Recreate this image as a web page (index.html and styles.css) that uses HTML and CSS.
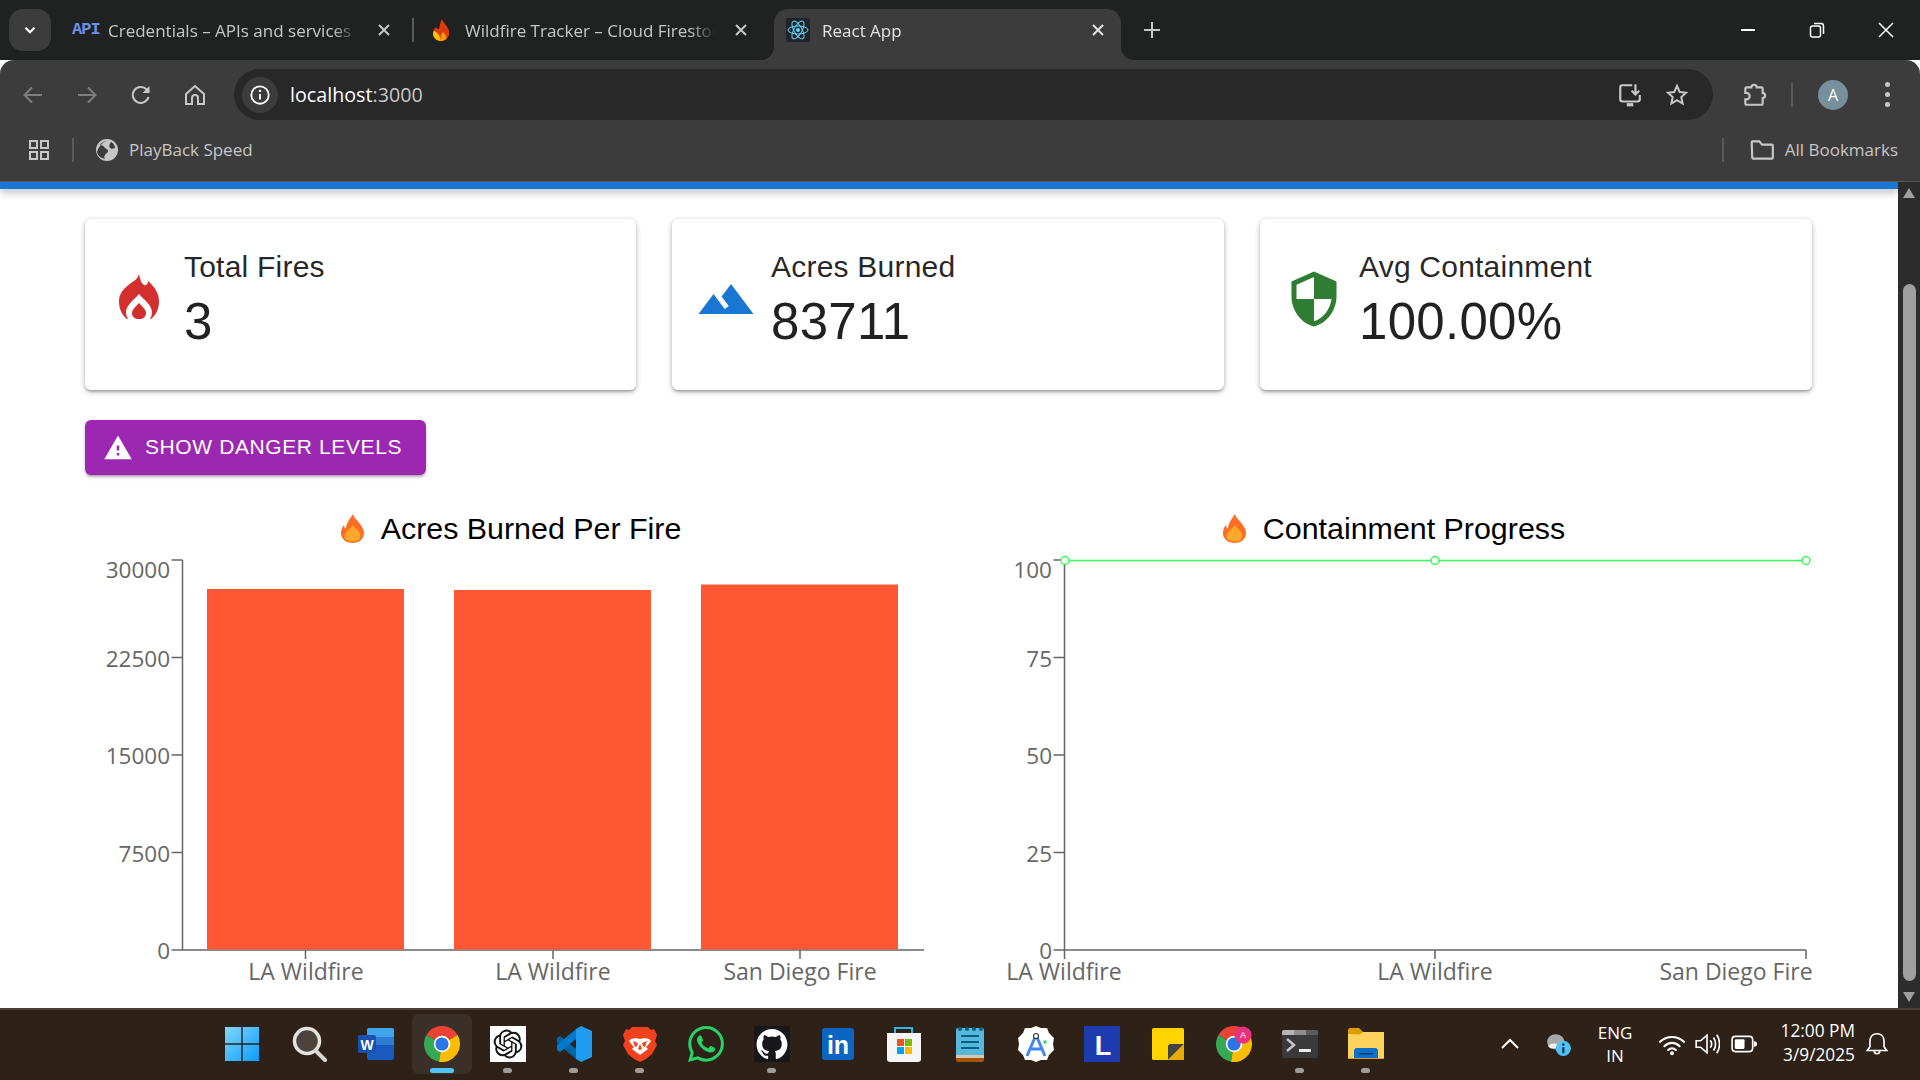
FILE: index.html
```html
<!DOCTYPE html>
<html lang="en">
<head>
<meta charset="utf-8">
<title>React App</title>
<link rel="stylesheet" href="styles.css">
</head>
<body>
<div class="screen">

  <header class="tabstrip">
    <button class="tabsearch"><svg viewBox="0 0 24 24" class="i18"><path d="M6 9l6 6 6-6" class="st-white3"/></svg></button>
    <div class="tab">
      <span class="fav fav-api">API</span>
      <span class="tab-title">Credentials – APIs and services -</span>
      <svg viewBox="0 0 16 16" class="tab-x"><path d="M3 3l10 10M13 3L3 13" class="st-light2"/></svg>
    </div>
    <div class="tab tab-sep">
      <svg viewBox="0 0 24 24" class="fav"><path d="M13 1c1 4 6 7 7 12 1 6-3 10-8 10S4 19 4 15c0-3 2-5 3-6 1 2 2 2 3 2 1-3 1-7 3-10z" fill="#dd3b0f"/><path d="M5 13c3 1 6 4 7 10-4 0-8-3-8-7 0-1 0-2 1-3z" fill="#ffc107"/><path d="M12 23c-1-4 0-7 2-9 2 2 4 4 3 7-1 1-3 2-5 2z" fill="#ff9800"/></svg>
      <span class="tab-title">Wildfire Tracker – Cloud Firestor</span>
      <svg viewBox="0 0 16 16" class="tab-x"><path d="M3 3l10 10M13 3L3 13" class="st-light2"/></svg>
    </div>
    <div class="tab tab-active">
      <svg viewBox="0 0 24 24" class="fav"><rect width="24" height="24" rx="2" fill="#20232a"/><circle cx="12" cy="12" r="2" fill="#61dafb"/><g class="st-react"><ellipse cx="12" cy="12" rx="10" ry="4"/><ellipse cx="12" cy="12" rx="10" ry="4" transform="rotate(60 12 12)"/><ellipse cx="12" cy="12" rx="10" ry="4" transform="rotate(120 12 12)"/></g></svg>
      <span class="tab-title tab-title-on">React App</span>
      <svg viewBox="0 0 16 16" class="tab-x"><path d="M3 3l10 10M13 3L3 13" class="st-light2"/></svg>
    </div>
    <button class="newtab"><svg viewBox="0 0 20 20" class="i20"><path d="M10 2v16M2 10h16" class="st-light2"/></svg></button>
    <div class="winctl">
      <span class="winbtn"><svg viewBox="0 0 18 18" class="i18"><path d="M2 9h14" class="st-white2"/></svg></span>
      <span class="winbtn"><svg viewBox="0 0 18 18" class="i18"><rect x="2.500" y="5" width="10" height="11" rx="2" class="st-white15"/><path d="M6 2.500h7a2.500 2.500 0 0 1 2.500 2.500v8" class="st-white15"/></svg></span>
      <span class="winbtn"><svg viewBox="0 0 18 18" class="i18"><path d="M2 2l14 14M16 2L2 16" class="st-white15"/></svg></span>
    </div>
  </header>

  <section class="chrome">
    <div class="navrow">
      <span class="navbtn"><svg viewBox="0 0 24 24" class="i24"><path d="M21 12H4M11 4.500L3.500 12l7.500 7.500" class="st-dim2"/></svg></span>
      <span class="navbtn"><svg viewBox="0 0 24 24" class="i24"><path d="M3 12h17M13 4.500l7.500 7.500-7.500 7.500" class="st-dim2"/></svg></span>
      <span class="navbtn"><svg viewBox="0 0 24 24" class="i24"><path d="M19.500 14a8 8 0 1 1-1.800-7.500L20 9" class="st-light2"/><path d="M20.500 3v7h-7z" class="fi-light"/></svg></span>
      <span class="navbtn"><svg viewBox="0 0 24 24" class="i24"><path d="M3 11l9-8 9 8v10h-6v-6a3 3 0 0 0-6 0v6H3z" class="st-light2"/></svg></span>
      <div class="omnibox">
        <span class="infochip"><svg viewBox="0 0 24 24" class="i22"><circle cx="12" cy="12" r="9.500" class="st-white2"/><path d="M12 11v6" class="st-white2"/><circle cx="12" cy="7.500" r="1.300" fill="#fff"/></svg></span>
        <span class="url">localhost<span class="url-dim">:3000</span></span>
        <span class="omni-icon omni-first"><svg viewBox="0 0 24 24" class="i26"><path d="M14 3H5a2 2 0 0 0-2 2v11a2 2 0 0 0 2 2h14a2 2 0 0 0 2-2v-4" class="st-light2"/><path d="M9 21h6" class="st-light3"/><path d="M17 2v9M13.500 8l3.500 3.500L20.500 8" class="st-light2"/></svg></span>
        <span class="omni-icon"><svg viewBox="0 0 24 24" class="i24"><path d="M12 3l2.700 6 6.300.7-4.700 4.300 1.300 6.500-5.600-3.300-5.600 3.300 1.300-6.500L3 9.700 9.300 9z" class="st-light2"/></svg></span>
      </div>
      <span class="ext"><svg viewBox="0 0 24 24" class="i26"><path d="M5 5h4.500a2.500 2.500 0 0 1 5 0H19a1 1 0 0 1 1 1v4.200a2.300 2.300 0 0 1 0 4.600V20a1 1 0 0 1-1 1H5a1 1 0 0 1-1-1v-4h1a3 3 0 0 0 0-6H4V6a1 1 0 0 1 1-1z" class="st-light2"/></svg></span>
      <span class="vsep vsep-nav"></span>
      <span class="avatar">A</span>
      <span class="dots"><i></i><i></i><i></i></span>
    </div>
    <div class="bookmarks">
      <svg viewBox="0 0 24 24" class="apps"><g class="st-light2"><rect x="3" y="3" width="7" height="7"/><rect x="14" y="3" width="7" height="7"/><rect x="3" y="14" width="7" height="7"/><rect x="14" y="14" width="7" height="7"/></g></svg>
      <span class="vsep vsep-bm"></span>
      <svg viewBox="0 0 24 24" class="globe"><circle cx="12" cy="12" r="11" fill="#c7c7c7"/><path d="M12 3c-3 0-6 2-7 4 2 0 4 1 5 3 1 1 3 1 3 3s-2 2-3 4c-1 1-1 3 0 4-4-1-7-3-8-7 1-4 5-10 10-11zM16 4c2 1 4 3 4 6-2 1-4 1-5 0s-1-4 1-6z" fill="#3c3c3c"/></svg>
      <span class="bm-text">PlayBack Speed</span>
      <span class="vsep vsep-right"></span>
      <svg viewBox="0 0 24 24" class="folder"><path d="M2.500 5a1 1 0 0 1 1-1h6l2.500 3h9a1 1 0 0 1 1 1v11a1 1 0 0 1-1 1h-17a1 1 0 0 1-1-1z" class="st-light2"/></svg>
      <span class="bm-all">All Bookmarks</span>
    </div>
  </section>

  <section class="viewport">
    <div class="page">
      <div class="appbar"></div>
      <main class="content">
        <div class="cards">
          <article class="card">
            <svg viewBox="0 0 60 60" class="card-icon"><path fill="#d32f2f" d="M30 5c1 5 2 9 5 11 2 1 4-1 4-4 7 6 11 13 11 20 0 8-3 14-8 18H18c-5-4-8-10-8-18 0-10 9-16 15-20 3-2 4-4 5-7z"/><path fill="#fff" d="M30 25c4 5 13 11 13 18 0 3-1 5-2 7H19c-1-2-2-4-2-7 0-7 9-13 13-18z"/><path fill="#d32f2f" d="M30 34c3 3 7 7 7 10 0 4-3 6-7 6s-7-2-7-6c0-3 4-7 7-10z"/></svg>
            <div class="card-text"><h2 class="card-label">Total Fires</h2><p class="card-value">3</p></div>
          </article>
          <article class="card">
            <svg viewBox="0 0 24 24" class="card-icon"><path fill="#1976d2" d="M14 6l-3.750 5 2.850 3.800-1.600 1.200C9.810 13.750 7 10 7 10l-6 8h22L14 6z"/></svg>
            <div class="card-text"><h2 class="card-label">Acres Burned</h2><p class="card-value">83711</p></div>
          </article>
          <article class="card">
            <svg viewBox="0 0 24 24" class="card-icon"><path fill="#2e7d32" d="M12 1L3 5v6c0 5.550 3.840 10.740 9 12 5.160-1.260 9-6.450 9-12V5l-9-4zm0 10.990h7c-.53 4.120-3.280 7.790-7 8.940V12H5V6.300l7-3.110v8.800z"/></svg>
            <div class="card-text"><h2 class="card-label">Avg Containment</h2><p class="card-value">100.00%</p></div>
          </article>
        </div>

        <button class="danger">
          <svg viewBox="0 0 24 24" class="danger-icon"><path fill="#fff" d="M1 21h22L12 2 1 21zm12-3h-2v-2h2v2zm0-4h-2v-4h2v4z"/></svg>
          <span class="danger-text">SHOW DANGER LEVELS</span>
        </button>

        <div class="charts">
          <section class="chart chart-left">
            <h3 class="chart-title"><svg viewBox="0 0 23 29" class="emoji"><path fill="#ff6d22" d="M12 0c1 4 4 6 7 10 3 4 4 7 4 9 0 6-5 10-11.500 10S0 25 0 19c0-3 1-6 3-8 0 2 1 3 2 4C5 9 9 5 12 0z"/><path fill="#ffa92c" d="M11.500 11c2 3 8 6 8 11 0 3-3 5.500-8 5.500s-8-2.500-8-5.500c0-4 6-7 8-11z"/></svg><span>Acres Burned Per Fire</span></h3>
            <svg class="plot plot-left" viewBox="85 546 852 460">
              <g class="axis">
                <path d="M182.500 560V950M171.500 560h11M171.500 657.500h11M171.500 755h11M171.500 852.500h11M171.500 950H924M305.500 950v9M553 950v9M800 950v9"/>
              </g>
              <g class="bar">
                <rect x="207" y="589" width="197" height="360.500"/>
                <rect x="454" y="590" width="197" height="359.500"/>
                <rect x="701" y="584.500" width="197" height="365"/>
              </g>
              <g class="ytick">
                <text x="170" y="578">30000</text><text x="170" y="667">22500</text><text x="170" y="764">15000</text><text x="170" y="862">7500</text><text x="170" y="959">0</text>
              </g>
              <g class="xtick">
                <text x="306" y="980">LA Wildfire</text><text x="553" y="980">LA Wildfire</text><text x="800" y="980">San Diego Fire</text>
              </g>
            </svg>
          </section>
          <section class="chart chart-right">
            <h3 class="chart-title"><svg viewBox="0 0 23 29" class="emoji"><path fill="#ff6d22" d="M12 0c1 4 4 6 7 10 3 4 4 7 4 9 0 6-5 10-11.500 10S0 25 0 19c0-3 1-6 3-8 0 2 1 3 2 4C5 9 9 5 12 0z"/><path fill="#ffa92c" d="M11.500 11c2 3 8 6 8 11 0 3-3 5.500-8 5.500s-8-2.500-8-5.500c0-4 6-7 8-11z"/></svg><span>Containment Progress</span></h3>
            <svg class="plot plot-right" viewBox="976 546 836 460">
              <g class="axis">
                <path d="M1064.500 560V950M1053.500 560h11M1053.500 657.500h11M1053.500 755h11M1053.500 852.500h11M1053.500 950H1806M1064.500 950v9M1435 950v9M1806 950v9"/>
              </g>
              <path class="line" d="M1065 560.500H1806"/>
              <g class="dot"><circle cx="1065" cy="560.500" r="4"/><circle cx="1435" cy="560.500" r="4"/><circle cx="1806" cy="560.500" r="4"/></g>
              <g class="ytick">
                <text x="1052" y="578">100</text><text x="1052" y="667">75</text><text x="1052" y="764">50</text><text x="1052" y="862">25</text><text x="1052" y="959">0</text>
              </g>
              <g class="xtick">
                <text x="1064" y="980">LA Wildfire</text><text x="1435" y="980">LA Wildfire</text><text x="1736" y="980">San Diego Fire</text>
              </g>
            </svg>
          </section>
        </div>
      </main>
    </div>
    <aside class="scrollbar">
      <svg viewBox="0 0 14 12" class="sb-arrow"><path d="M7 1l6 10H1z" fill="#9f9f9f"/></svg>
      <div class="sb-thumb"></div>
      <svg viewBox="0 0 14 12" class="sb-arrow sb-arrow-down"><path d="M7 11l6-10H1z" fill="#9f9f9f"/></svg>
    </aside>
  </section>

  <footer class="taskbar">
    <div class="tb-item tb-start">
      <svg viewBox="0 0 36 36" class="tb-icon"><defs><linearGradient id="win" x1="0" y1="0" x2="1" y2="1"><stop offset="0" stop-color="#7fd8fb"/><stop offset="1" stop-color="#0c9bfa"/></linearGradient></defs><path fill="url(#win)" d="M1 1h16.300v16.300H1zM18.700 1H35v16.300H18.700zM1 18.700h16.300V35H1zM18.700 18.700H35V35H18.700z"/></svg>
    </div>
    <div class="tb-item">
      <svg viewBox="0 0 36 36" class="tb-icon"><circle cx="15" cy="15" r="12.500" fill="#4d433d" stroke="#e6e2de" stroke-width="3.500"/><path d="M24 25l9 9" stroke="#d9d5d1" stroke-width="4" stroke-linecap="round"/></svg>
    </div>
    <div class="tb-item">
      <svg viewBox="0 0 36 36" class="tb-icon"><rect x="9" y="2" width="27" height="32" rx="2" fill="#185abd"/><path d="M9 4a2 2 0 0 1 2-2h23a2 2 0 0 1 2 2v7H9z" fill="#41a5ee"/><path d="M9 11h27v8H9z" fill="#2b7cd3"/><rect y="9" width="18" height="18" rx="2" fill="#1850b0"/><text x="9" y="23.500" class="tb-word">W</text></svg>
    </div>
    <div class="tb-item tb-active">
      <svg viewBox="0 0 48 48" class="tb-icon"><path fill="#ea4335" d="M24 24L3.200 12A24 24 0 0 1 44.800 12z"/><path fill="#34a853" d="M24 24L3.200 12A24 24 0 0 0 20 47.700z"/><path fill="#fbbc04" d="M24 24L44.800 12A24 24 0 0 1 20 47.700z"/><circle cx="24" cy="24" r="11" fill="#fff"/><circle cx="24" cy="24" r="8.800" fill="#2a75e8"/></svg>
      <i class="tb-bar"></i>
    </div>
    <div class="tb-item">
      <svg viewBox="-3 -3 30 30" class="tb-icon tb-white"><path fill="#111" d="M22.282 9.821a5.985 5.985 0 0 0-.516-4.910 6.046 6.046 0 0 0-6.510-2.900A6.065 6.065 0 0 0 4.981 4.180a5.985 5.985 0 0 0-3.998 2.900 6.046 6.046 0 0 0 .743 7.097 5.980 5.980 0 0 0 .510 4.911 6.051 6.051 0 0 0 6.515 2.900A5.985 5.985 0 0 0 13.260 24a6.056 6.056 0 0 0 5.772-4.206 5.990 5.990 0 0 0 3.997-2.900 6.056 6.056 0 0 0-.747-7.073zM13.260 22.430a4.476 4.476 0 0 1-2.876-1.040l.141-.081 4.779-2.758a.795.795 0 0 0 .392-.681v-6.737l2.020 1.168a.071.071 0 0 1 .038.052v5.583a4.504 4.504 0 0 1-4.494 4.494zM3.600 18.304a4.470 4.470 0 0 1-.535-3.014l.142.085 4.783 2.759a.771.771 0 0 0 .780 0l5.843-3.369v2.332a.08.08 0 0 1-.033.062L9.740 19.950a4.500 4.500 0 0 1-6.140-1.646zM2.340 7.896a4.485 4.485 0 0 1 2.366-1.973V11.600a.766.766 0 0 0 .388.676l5.815 3.355-2.020 1.168a.076.076 0 0 1-.071 0l-4.830-2.786A4.504 4.504 0 0 1 2.340 7.872zm16.597 3.855l-5.833-3.387L15.119 7.200a.076.076 0 0 1 .071 0l4.830 2.791a4.494 4.494 0 0 1-.676 8.105v-5.678a.790.790 0 0 0-.407-.667zm2.010-3.023l-.141-.085-4.774-2.782a.776.776 0 0 0-.785 0L9.409 9.230V6.897a.066.066 0 0 1 .028-.061l4.830-2.787a4.500 4.500 0 0 1 6.680 4.660zm-12.640 4.135l-2.020-1.164a.08.08 0 0 1-.038-.057V6.075a4.500 4.500 0 0 1 7.375-3.453l-.142.080L8.704 5.460a.795.795 0 0 0-.393.681zm1.097-2.365l2.602-1.500 2.607 1.500v2.999l-2.597 1.500-2.607-1.500z"/></svg>
      <i class="tb-dot"></i>
    </div>
    <div class="tb-item">
      <svg viewBox="0 0 36 36" class="tb-icon"><path fill="#0065a9" d="M1 12l3-2 21 17-5 6-19-16z"/><path fill="#007acc" d="M1 24l3 2L25 9l-5-6L1 19z"/><path fill="#1f9cf0" d="M25 0l11 5v26l-11 5c2-1 2-2 2-3V3c0-1 0-2-2-3z"/><path fill="#1f9cf0" d="M25 0l2 1v34l-2 1-5-3L20 3z"/></svg>
      <i class="tb-dot"></i>
    </div>
    <div class="tb-item">
      <svg viewBox="0 0 36 36" class="tb-icon"><path fill="#f1421d" d="M10 1h16l3 3 3-1 3 6-2 6 2 4-5 9-6 5-6 3-6-3-6-5-5-9 2-4-2-6 3-6 3 1z"/><path fill="#fff" d="M9 13l5-1 4 1 4-1 5 1 2 2-3 4-2 2 2 2-4 3-4 3-4-3-4-3 2-2-2-2-3-4z"/><path fill="#f1421d" d="M11 15l5 2-1 3-2 1zM25 15l-5 2 1 3 2 1zM18 18l-2 5 2 1 2-1z"/></svg>
      <i class="tb-dot"></i>
    </div>
    <div class="tb-item">
      <svg viewBox="0 0 24 24" class="tb-icon"><path fill="#25d366" d="M17.472 14.382c-.297-.149-1.758-.867-2.030-.967-.273-.099-.471-.148-.670.150-.197.297-.767.966-.940 1.164-.173.199-.347.223-.644.075-.297-.150-1.255-.463-2.390-1.475-.883-.788-1.480-1.761-1.653-2.059-.173-.297-.018-.458.130-.606.134-.133.298-.347.446-.520.149-.174.198-.298.298-.497.099-.198.050-.371-.025-.520-.075-.149-.669-1.612-.916-2.207-.242-.579-.487-.500-.669-.510-.173-.008-.371-.010-.570-.010-.198 0-.520.074-.792.372-.272.297-1.040 1.016-1.040 2.479 0 1.462 1.065 2.875 1.213 3.074.149.198 2.096 3.200 5.077 4.487.709.306 1.262.489 1.694.625.712.227 1.360.195 1.871.118.571-.085 1.758-.719 2.006-1.413.248-.694.248-1.289.173-1.413-.074-.124-.272-.198-.570-.347m-5.421 7.403h-.004a9.870 9.870 0 01-5.031-1.378l-.361-.214-3.741.982.998-3.648-.235-.374a9.860 9.860 0 01-1.510-5.260c.001-5.450 4.436-9.884 9.888-9.884 2.640 0 5.122 1.030 6.988 2.898a9.825 9.825 0 012.893 6.994c-.003 5.450-4.437 9.884-9.885 9.884m8.413-18.297A11.815 11.815 0 0012.050 0C5.495 0 .160 5.335.157 11.892c0 2.096.547 4.142 1.588 5.945L.057 24l6.305-1.654a11.882 11.882 0 005.683 1.448h.005c6.554 0 11.890-5.335 11.893-11.893a11.821 11.821 0 00-3.480-8.413z"/></svg>
    </div>
    <div class="tb-item">
      <svg viewBox="-2 -2 28 28" class="tb-icon tb-ghbg"><path fill="#fff" d="M12 .297c-6.630 0-12 5.373-12 12 0 5.303 3.438 9.800 8.205 11.385.6.113.82-.258.82-.577 0-.285-.01-1.040-.015-2.040-3.338.724-4.042-1.610-4.042-1.610C4.422 18.070 3.633 17.700 3.633 17.700c-1.087-.744.084-.729.084-.729 1.205.084 1.838 1.236 1.838 1.236 1.070 1.835 2.809 1.305 3.495.998.108-.776.417-1.305.76-1.605-2.665-.3-5.466-1.332-5.466-5.930 0-1.310.465-2.380 1.235-3.220-.135-.303-.54-1.523.105-3.176 0 0 1.005-.322 3.300 1.230.96-.267 1.980-.399 3-.405 1.020.006 2.040.138 3 .405 2.280-1.552 3.285-1.230 3.285-1.230.645 1.653.24 2.873.12 3.176.765.840 1.230 1.910 1.230 3.220 0 4.610-2.805 5.625-5.475 5.920.42.36.81 1.096.81 2.220 0 1.606-.015 2.896-.015 3.286 0 .315.21.69.825.57C20.565 22.092 24 17.592 24 12.297c0-6.627-5.373-12-12-12"/></svg>
      <i class="tb-dot"></i>
    </div>
    <div class="tb-item">
      <svg viewBox="0 0 36 36" class="tb-icon"><rect x="2" y="2" width="32" height="32" rx="3" fill="#0a66c2"/><text x="18" y="28" class="tb-in">in</text></svg>
    </div>
    <div class="tb-item">
      <svg viewBox="0 0 36 36" class="tb-icon"><path d="M9 7V2h17v5" fill="none" stroke="#2fb4ea" stroke-width="2"/><path fill="#f5f5f5" d="M1 7h34v26a3 3 0 0 1-3 3H4a3 3 0 0 1-3-3z"/><path fill="#f25022" d="M11 13h7v7h-7z"/><path fill="#7fba00" d="M19 13h7v7h-7z"/><path fill="#00a4ef" d="M11 21h7v7h-7z"/><path fill="#ffb900" d="M19 21h7v7h-7z"/></svg>
    </div>
    <div class="tb-item">
      <svg viewBox="0 0 36 36" class="tb-icon"><rect x="4" y="2" width="28" height="30" rx="2" fill="#55b8dc"/><path d="M4 31h28v3a2 2 0 0 1-2 2H6a2 2 0 0 1-2-2z" fill="#a4540e"/><path d="M4 29h28v3H4z" fill="#d8c7b2"/><g fill="#055f80"><circle cx="8" cy="3" r="2"/><circle cx="15" cy="3" r="2"/><circle cx="22" cy="3" r="2"/><circle cx="29" cy="3" r="2"/><path d="M9 9h18v2H9zM9 15h18v2H9zM9 21h18v2H9z"/></g></svg>
    </div>
    <div class="tb-item">
      <svg viewBox="0 0 36 36" class="tb-icon"><path fill="#fff" d="M18 0l5 2 6 0 2 5 5 5-1 6 1 6-5 5-2 5-6 0-5 2-5-2-6 0-2-5-5-5 1-6-1-6 5-5 2-5 6 0z"/><path d="M18 9L9 30M18 9l9 21M12 23h12" fill="none" stroke="#4285f4" stroke-width="3"/><circle cx="18" cy="10" r="2.500" fill="#fff" stroke="#333" stroke-width="1.200"/><path d="M25 15l3-1 1 3-3 1z" fill="#3ddc84"/></svg>
    </div>
    <div class="tb-item">
      <svg viewBox="0 0 36 36" class="tb-icon"><rect width="36" height="36" fill="#1e3cae"/><text x="19" y="29" class="tb-l">L</text></svg>
    </div>
    <div class="tb-item">
      <svg viewBox="0 0 36 36" class="tb-icon"><rect x="2" y="2" width="32" height="32" rx="1.500" fill="#ffd400"/><path d="M18 34V20a4 4 0 0 1 2-2h14z" fill="#444"/><path d="M18 34l16-16v16z" fill="#e7ac00"/></svg>
    </div>
    <div class="tb-item">
      <svg viewBox="0 0 48 48" class="tb-icon"><path fill="#ea4335" d="M24 24L3.200 12A24 24 0 0 1 44.800 12z"/><path fill="#34a853" d="M24 24L3.200 12A24 24 0 0 0 20 47.700z"/><path fill="#fbbc04" d="M24 24L44.800 12A24 24 0 0 1 20 47.700z"/><circle cx="24" cy="24" r="11" fill="#fff"/><circle cx="24" cy="24" r="8.800" fill="#2a75e8"/><circle cx="36" cy="12" r="11.500" fill="#ec2f7f"/><text x="36" y="16.500" class="tb-badge">A</text></svg>
    </div>
    <div class="tb-item">
      <svg viewBox="0 0 36 36" class="tb-icon"><rect y="4" width="36" height="28" rx="2" fill="#3a3a3a"/><path d="M0 6a2 2 0 0 1 2-2h10v5H0z" fill="#b5b5b5"/><path d="M12 4h12v5H12z" fill="#8d8d8d"/><path d="M24 4h10a2 2 0 0 1 2 2v3H24z" fill="#5c5c5c"/><path d="M5 13l7 6-7 6" fill="none" stroke="#c5c5c5" stroke-width="2.500"/><path d="M17 23h12v3H17z" fill="#eee"/></svg>
      <i class="tb-dot"></i>
    </div>
    <div class="tb-item">
      <svg viewBox="0 0 36 36" class="tb-icon"><path d="M0 4a2 2 0 0 1 2-2h9l4 4h21v6H0z" fill="#dc9e00"/><path d="M0 8l12 .5 3-2.500h21v26H0z" fill="#fcd35c"/><path d="M6 33V25a3 3 0 0 1 3-3h18a3 3 0 0 1 3 3v8z" fill="#0d70c8"/><path d="M11 27h14v1.500H11z" fill="#063d78"/><path d="M0 32h36v1H0z" fill="#dc9e00"/></svg>
      <i class="tb-dot"></i>
    </div>

    <svg viewBox="0 0 24 24" class="tray-chevron"><path d="M4 16l8-8 8 8" class="st-white2"/></svg>
    <svg viewBox="0 0 24 24" class="tray-cloud"><ellipse cx="9" cy="10" rx="8" ry="7" fill="#a8a8a8"/><path d="M2 14c4-4 8-2 12-1v3H4z" fill="#f2f2f2"/><circle cx="16" cy="16" r="7" fill="#4fc3f7"/><path d="M15 15h2v5.500h-2z" fill="#10304a"/><circle cx="16" cy="12.500" r="1.200" fill="#10304a"/></svg>
    <div class="tray-lang"><span>ENG</span><span>IN</span></div>
    <svg viewBox="0 0 24 24" class="tray-wifi"><path d="M1 10c6-6 16-6 22 0M5 14c4-4 10-4 14 0M8.500 17.500c2-2 5-2 7 0" class="st-white2t"/><circle cx="12" cy="20.500" r="1.800" fill="#fff"/></svg>
    <svg viewBox="0 0 24 24" class="tray-sound"><path d="M2 9h4l6-5v16l-6-5H2z" class="st-white15"/><path d="M15 8.500c1.500 2 1.500 5 0 7M18 6c2.500 3.500 2.500 8.500 0 12M21 3.500c3.500 5 3.500 12 0 17" class="st-white15"/></svg>
    <svg viewBox="0 0 24 24" class="tray-batt"><rect x="1" y="5" width="19" height="14" rx="3" class="st-white15"/><rect x="3.500" y="7.500" width="9" height="9" rx="1" fill="#fff"/><path d="M21.500 10v4a2 2 0 0 0 0-4z" fill="#fff" stroke="#fff"/></svg>
    <div class="tray-clock"><span>12:00 PM</span><span>3/9/2025</span></div>
    <svg viewBox="0 0 24 24" class="tray-bell"><path d="M12 2.500c-4 0-6.500 3-6.500 7v5L3 18h18l-2.500-3.500v-5c0-4-2.500-7-6.500-7zM9.500 18.500a2.500 2.500 0 0 0 5 0" class="st-white15"/></svg>
  </footer>
</div>
</body>
</html>
```

FILE: styles.css
```css
* { box-sizing: border-box; }
html, body { margin: 0; height: 100%; overflow: hidden; }
body { font-family: "Liberation Sans", Arial, sans-serif; background: #fff; }
h2, h3, p { margin: 0; font-weight: 400; }
button { border: 0; padding: 0; font: inherit; color: inherit; background: none; }
svg { display: block; flex: none; }

.screen { display: flex; flex-direction: column; width: 1920px; height: 1080px; }

/* stroke helpers */
.st-white3, .st-white2, .st-white2t, .st-white15, .st-light2, .st-light3, .st-dim2, .st-react { fill: none; }
.st-white3 { stroke: #fff; stroke-width: 3; }
.st-white2 { stroke: #fff; stroke-width: 2; }
.st-white2t { stroke: #fff; stroke-width: 2; stroke-linecap: round; }
.st-white15 { stroke: #fff; stroke-width: 1.5; }
.st-light2 { stroke: #c7c7c7; stroke-width: 2; }
.st-light3 { stroke: #c7c7c7; stroke-width: 3; }
.st-dim2 { stroke: #7d7d7d; stroke-width: 2; }
.st-react { stroke: #61dafb; stroke-width: 1; }
.fi-light { fill: #c7c7c7; }
.i18 { width: 18px; height: 18px; }
.i20 { width: 20px; height: 20px; }
.i22 { width: 22px; height: 22px; }
.i24 { width: 24px; height: 24px; }
.i26 { width: 26px; height: 26px; }

/* tab strip */
.tabstrip { display: flex; align-items: flex-start; height: 60px; flex: none; background: #202222; color: #c7c7c7; font-family: "Open Sans", sans-serif; }
.tabsearch { display: flex; align-items: center; justify-content: center; width: 42px; height: 42px; margin: 9px 9px 0 9px; border-radius: 14px; background: #3c3c3c; }
.tab { position: relative; display: flex; align-items: center; width: 347px; height: 51px; margin: 9px 10px 0 0; padding: 0 15px 9px 12px; font-size: 17px; }
.tab-sep::before { content: ""; position: absolute; left: -5px; top: 9px; width: 2px; height: 24px; background: #5a5a5a; }
.fav { width: 24px; height: 24px; margin-right: 12px; flex: none; }
.fav-api { font: 700 17px/24px "Liberation Mono", monospace; color: #6d8fe8; letter-spacing: -1px; }
.tab-title { flex: 1; min-width: 0; padding-top: 2px; white-space: nowrap; line-height: 24px; -webkit-mask-image: linear-gradient(90deg, #000 225px, transparent 250px); mask-image: linear-gradient(90deg, #000 225px, transparent 250px); }
.tab-title-on { color: #e3e3e3; }
.tab-x { width: 16px; height: 16px; }
.tab-active { background: #3c3c3c; border-radius: 14px 14px 0 0; }
.tab-active .tab-x path { stroke: #e3e3e3; }
.tab-active::before, .tab-active::after { content: ""; position: absolute; bottom: 0; width: 14px; height: 14px; }
.tab-active::before { left: -14px; background: radial-gradient(circle at 0 0, transparent 14px, #3c3c3c 14.5px); }
.tab-active::after { right: -14px; background: radial-gradient(circle at 100% 0, transparent 14px, #3c3c3c 14.5px); }
.newtab { display: flex; align-items: center; justify-content: center; width: 42px; height: 42px; margin-top: 9px; }
.winctl { display: flex; margin-left: auto; width: 207px; height: 60px; }
.winbtn { display: flex; align-items: center; justify-content: center; width: 69px; height: 60px; }

/* toolbar */
.chrome { flex: none; height: 122px; background: #3c3c3c; border-bottom: 1px solid #575757; border-radius: 14px 14px 0 0; margin-top: 0; color: #c7c7c7; font-family: "Open Sans", sans-serif; }
.navrow { display: flex; align-items: center; height: 69px; padding-left: 6px; }
.navbtn { display: flex; align-items: center; justify-content: center; width: 54px; height: 54px; }
.omnibox { display: flex; align-items: center; width: 1479px; height: 51px; margin-left: 12px; padding: 0 21px 0 8px; border-radius: 26px; background: #282828; }
.infochip { display: flex; align-items: center; justify-content: center; width: 36px; height: 36px; border-radius: 50%; background: #3c3c3c; }
.url { margin-left: 12px; font-size: 19.7px; color: #fff; }
.url-dim { color: #c7c7c7; }
.omni-icon { display: flex; justify-content: center; width: 30px; }
.omni-first { margin-left: auto; margin-right: 17px; }
.ext { display: flex; justify-content: center; width: 42px; margin-left: 20px; }
.vsep { flex: none; width: 2px; height: 24px; background: #5a5a5a; }
.vsep-nav { margin-left: 16px; }
.avatar { display: flex; align-items: center; justify-content: center; width: 30px; height: 30px; margin-left: 25px; border-radius: 50%; background: #78909c; color: #fff; font-size: 16px; }
.dots { display: flex; flex-direction: column; align-items: center; gap: 5px; width: 42px; margin-left: 18px; }
.dots i { width: 5px; height: 5px; border-radius: 50%; background: #c7c7c7; }

.bookmarks { display: flex; align-items: center; height: 52px; padding: 0 22px 10px 27px; font-size: 17px; }
.apps { width: 24px; height: 24px; }
.vsep-bm { margin-left: 21px; }
.globe { width: 24px; height: 24px; margin-left: 21px; }
.bm-text, .bm-all { position: relative; top: -1px; }
.bm-text { margin-left: 10px; }
.vsep-right { margin-left: auto; }
.folder { width: 26px; height: 26px; margin-left: 25px; }
.bm-all { margin-left: 10px; }

/* page */
.viewport { display: flex; flex: 1; min-height: 0; }
.page { flex: 1; min-width: 0; overflow: hidden; background: #fff; }
.appbar { position: relative; height: 7px; background: #1976d2; box-shadow: 0 3px 9px rgba(0, 0, 0, .3); }
.content { padding: 30px 86px 0 85px; color: rgba(0, 0, 0, .87); }
.cards { display: grid; grid-template-columns: 551px 552px 552px; gap: 36px; }
.card { display: flex; align-items: center; padding: 24px 24px 36px; border-radius: 6px; background: #fff; box-shadow: 0 3px 2px -3px rgba(0,0,0,.2), 0 1.500px 2px rgba(0,0,0,.14), 0 1.500px 5px rgba(0,0,0,.12), 0 2px 6px rgba(0,0,0,.16); }
.card-icon { width: 60px; height: 60px; margin-right: 15px; }
.card-label { font-size: 30px; line-height: 48px; letter-spacing: .22px; }
.card-value { font-size: 51px; line-height: 61px; padding-bottom: 2px; letter-spacing: .3px; }

.danger { display: flex; align-items: center; height: 55px; margin-top: 30px; padding: 0 24px 0 18px; border-radius: 6px; background: #9c27b0; color: #fff; font-size: 21px; letter-spacing: .6px; box-shadow: 0 3px 2px -2px rgba(0,0,0,.2), 0 2px 3px rgba(0,0,0,.14), 0 2px 5px rgba(0,0,0,.12); }
.danger-icon { width: 30px; height: 30px; margin-right: 12px; }
.danger-text { padding-bottom: 2px; }

.charts { display: grid; grid-template-columns: 852px 836px; gap: 39px; margin-top: 35px; }
.chart-title { display: flex; align-items: center; justify-content: center; gap: 17px; height: 36px; font-size: 30.4px; color: #000; }
.emoji { width: 23px; height: 29px; }
.plot { width: 100%; height: 460px; }
.axis path { fill: none; stroke: #666; stroke-width: 1.500; }
.bar rect { fill: #ff5733; }
.line { fill: none; stroke: #33ff57; stroke-width: 1.500; }
.dot circle { fill: #fff; stroke: #33ff57; stroke-width: 1.500; }
.ytick text, .xtick text { font-family: "Open Sans", sans-serif; fill: #666; }
.ytick text { font-size: 22.500px; text-anchor: end; }
.xtick text { font-size: 23px; text-anchor: middle; }

/* scrollbar */
.scrollbar { display: flex; flex-direction: column; align-items: center; flex: none; width: 22px; padding: 5px 0 5px; background: #2c2c2c; }
.sb-arrow { width: 14px; height: 12px; }
.sb-thumb { width: 13px; height: 699px; margin: 85px 0 10px; border-radius: 7px; background: #9f9f9f; }

/* taskbar */
.taskbar { display: flex; align-items: flex-start; flex: none; height: 72px; padding-left: 211px; background: #2d2118; border-top: 2px solid #4a4037; color: #fff; font-family: "Open Sans", sans-serif; }
.tb-item { position: relative; flex: none; display: flex; justify-content: center; width: 66px; height: 70px; padding-top: 16px; }
.tb-start .tb-icon { margin-left: -4px; }
.tb-icon { width: 36px; height: 36px; }
.tb-white { background: #fff; }
.tb-ghbg { background: #18181a; }
.tb-active::before { content: ""; position: absolute; left: 3px; top: 4px; width: 60px; height: 60px; border-radius: 7px; background: rgba(255, 255, 255, .07); }
.tb-active .tb-icon { position: relative; }
.tb-dot, .tb-bar { position: absolute; top: 58px; height: 5px; border-radius: 3px; }
.tb-dot { left: 28px; width: 9px; background: #a39c96; }
.tb-bar { left: 21px; width: 24px; background: #4fc3f7; }
.tb-word { font: 700 14px "Liberation Sans", sans-serif; fill: #fff; text-anchor: middle; }
.tb-in { font: 700 25px "Liberation Sans", sans-serif; fill: #fff; text-anchor: middle; }
.tb-l { font: 700 27px "Liberation Sans", sans-serif; fill: #fff; text-anchor: middle; }
.tb-badge { font: 400 12px "Liberation Sans", sans-serif; fill: #fff; text-anchor: middle; }

.tray-chevron { width: 24px; height: 24px; margin: 22px 0 0 99px; }
.tray-cloud { width: 26px; height: 26px; margin: 21px 0 0 24px; }
.tray-lang { display: flex; flex-direction: column; align-items: center; width: 50px; margin: 11px 0 0 18px; font-size: 17px; line-height: 23px; }
.tray-wifi { width: 26px; height: 26px; margin: 21px 0 0 19px; }
.tray-sound { width: 26px; height: 26px; margin: 21px 0 0 9px; }
.tray-batt { width: 26px; height: 26px; margin: 21px 0 0 11px; }
.tray-clock { display: flex; flex-direction: column; align-items: flex-end; width: 90px; margin: 9px 0 0 8px; font-size: 17.300px; line-height: 24px; }
.tray-bell { width: 26px; height: 26px; margin: 21px 0 0 9px; }
```
